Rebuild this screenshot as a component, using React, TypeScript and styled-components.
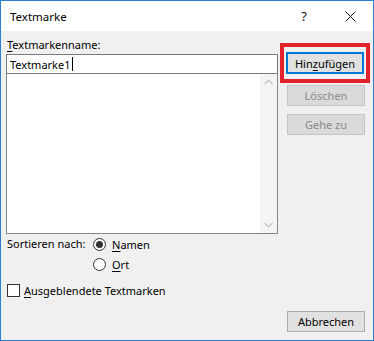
import * as React from 'react'
import styled, { createGlobalStyle } from 'styled-components'

const GlobalStyle = createGlobalStyle`
  html, body {
    margin: 0;
    padding: 0;
    background: #ffffff;
  }
  body {
    font-family: 'Noto Sans', 'Open Sans', 'Liberation Sans', sans-serif;
    font-size: 11px;
    color: #000;
  }
`

const Dialog = styled.div`
  box-sizing: border-box;
  width: 374px;
  height: 341px;
  border: 1px solid #2b7cd3;
  display: flex;
  flex-direction: column;
  background: #f0f0f0;
`

const TitleBar = styled.div`
  height: 30px;
  flex: none;
  background: #ffffff;
  display: flex;
  align-items: center;
  padding-left: 9px;
`

const Title = styled.div`
  flex: 1;
  font-size: 11.5px;
`

const TitleButton = styled.div`
  width: 46px;
  height: 30px;
  display: flex;
  align-items: center;
  justify-content: center;
  font-size: 13px;
  color: #111;
`

const Body = styled.div`
  flex: 1;
  display: flex;
  padding: 6px 3px 8px 5px;
  gap: 2px;
`

const LeftColumn = styled.div`
  width: 272px;
  flex: none;
  display: flex;
  flex-direction: column;
`

const RightColumn = styled.div`
  flex: 1;
  display: flex;
  flex-direction: column;
  padding-top: 6px;
`

const Label = styled.div`
  height: 17px;
  line-height: 15px;
  padding-left: 1px;
`

const Key = styled.span`
  text-decoration: underline;
  text-underline-offset: 2px;
`

const TextInput = styled.div`
  box-sizing: border-box;
  height: 20px;
  border: 1px solid #7a7a7a;
  background: #fff;
  display: flex;
  align-items: center;
  padding-left: 3px;
`

const Caret = styled.span`
  display: inline-block;
  width: 1px;
  height: 14px;
  background: #000;
  margin-left: 1px;
`

const ListBox = styled.div`
  box-sizing: border-box;
  height: 160px;
  border: 1px solid #828790;
  border-top: none;
  background: #fff;
  display: flex;
  justify-content: flex-end;
`

const ScrollTrack = styled.div`
  width: 17px;
  background: #f4f4f4;
  display: flex;
  flex-direction: column;
  justify-content: space-between;
  align-items: center;
  padding: 5px 0;
`

const SortRow = styled.div`
  display: flex;
  margin-top: 2px;
  padding-left: 1px;
`

const SortLabel = styled.div`
  width: 86px;
  line-height: 16px;
`

const RadioGroup = styled.div`
  display: flex;
  flex-direction: column;
  gap: 4px;
`

const Option = styled.label`
  display: flex;
  align-items: center;
  gap: 6px;
  height: 16px;
`

const RadioCircle = styled.span<{ $checked?: boolean }>`
  box-sizing: border-box;
  width: 13px;
  height: 13px;
  border-radius: 50%;
  border: 1px solid #333;
  background: #fff;
  display: flex;
  align-items: center;
  justify-content: center;
  &::after {
    content: '';
    width: 7px;
    height: 7px;
    border-radius: 50%;
    background: ${(p) => (p.$checked ? '#333' : 'transparent')};
  }
`

const CheckRow = styled(Option)`
  margin-top: 10px;
  padding-left: 1px;
  gap: 4px;
`

const CheckBox = styled.span`
  box-sizing: border-box;
  width: 13px;
  height: 13px;
  border: 1px solid #333;
  background: #fff;
`

const Highlight = styled.div`
  box-sizing: border-box;
  width: 90px;
  height: 40px;
  border: 4px solid #e3232c;
  display: flex;
  align-items: center;
  justify-content: center;
`

const Button = styled.div<{ $disabled?: boolean; $focused?: boolean; $gap?: number }>`
  box-sizing: border-box;
  width: 78px;
  height: 21px;
  margin-left: 7px;
  margin-top: ${(p) => p.$gap ?? 0}px;
  display: flex;
  align-items: center;
  justify-content: center;
  background: ${(p) => (p.$disabled ? '#dadada' : '#e1e1e1')};
  border: 1px solid ${(p) => (p.$disabled ? '#c4c4c4' : '#adadad')};
  color: ${(p) => (p.$disabled ? '#8a8a8a' : '#000')};
  ${(p) => (p.$focused ? 'border: 2px solid #0078d7; margin: 0; height: 22px;' : '')}
`

const Spacer = styled.div`
  flex: 1;
`

const Chevron = ({ up }: { up?: boolean }) => (
  <svg width="9" height="6" viewBox="0 0 9 6">
    <path
      d={up ? 'M0.5 5 L4.5 1 L8.5 5' : 'M0.5 1 L4.5 5 L8.5 1'}
      fill="none"
      stroke="#c2c2c2"
      strokeWidth="1.2"
    />
  </svg>
)

export default function App() {
  return (
    <>
      <GlobalStyle />
      <Dialog>
        <TitleBar>
          <Title>Textmarke</Title>
          <TitleButton>?</TitleButton>
          <TitleButton>
            <svg width="11" height="11" viewBox="0 0 11 11">
              <path d="M0.5 0.5 L10.5 10.5 M10.5 0.5 L0.5 10.5" stroke="#111" strokeWidth="1" />
            </svg>
          </TitleButton>
        </TitleBar>
        <Body>
          <LeftColumn>
            <Label>
              <Key>T</Key>extmarkenname:
            </Label>
            <TextInput>
              Textmarke1<Caret />
            </TextInput>
            <ListBox>
              <ScrollTrack>
                <Chevron up />
                <Chevron />
              </ScrollTrack>
            </ListBox>
            <SortRow>
              <SortLabel>Sortieren nach:</SortLabel>
              <RadioGroup>
                <Option>
                  <RadioCircle $checked />
                  <span>
                    <Key>N</Key>amen
                  </span>
                </Option>
                <Option>
                  <RadioCircle />
                  <span>
                    <Key>O</Key>rt
                  </span>
                </Option>
              </RadioGroup>
            </SortRow>
            <CheckRow>
              <CheckBox />
              <span>
                <Key>A</Key>usgeblendete Textmarken
              </span>
            </CheckRow>
          </LeftColumn>
          <RightColumn>
            <Highlight>
              <Button $focused>
                Hin<Key>z</Key>ufügen
              </Button>
            </Highlight>
            <Button $disabled $gap={2}>
              Löschen
            </Button>
            <Button $disabled $gap={8}>
              Gehe zu
            </Button>
            <Spacer />
            <Button>Abbrechen</Button>
          </RightColumn>
        </Body>
      </Dialog>
    </>
  )
}
